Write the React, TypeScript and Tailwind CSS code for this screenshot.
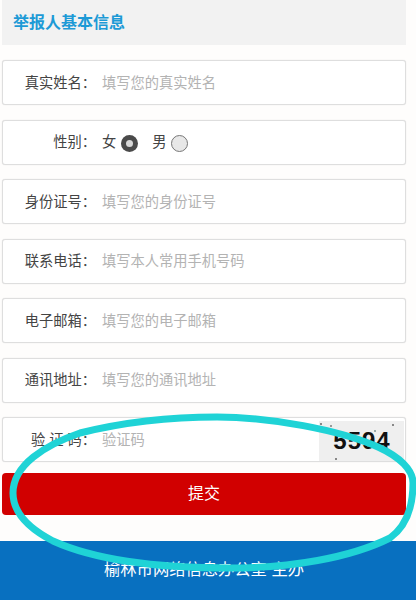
import React from 'react'

const cjk = "font-['Liberation_Sans','Noto_Sans_CJK_SC',sans-serif]"

const fields = [
  { label: '真实姓名：', hint: '填写您的真实姓名' },
  { label: '性别：', radio: true },
  { label: '身份证号：', hint: '填写您的身份证号' },
  { label: '联系电话：', hint: '填写本人常用手机号码' },
  { label: '电子邮箱：', hint: '填写您的电子邮箱' },
  { label: '通讯地址：', hint: '填写您的通讯地址' },
]

const rowClass =
  'flex h-[45px] items-center rounded-[3px] border border-[#dedede] bg-white pt-[2px] text-[14.25px] shadow-[0_0_1px_#d8d8d8]'

const Radio = ({ on }: { on?: boolean }) =>
  on ? (
    <span className="flex h-[17px] w-[17px] shrink-0 items-center justify-center rounded-full bg-[#4a4a4a]">
      <span className="block h-[7px] w-[7px] rounded-full bg-[#d8d8d8]" />
    </span>
  ) : (
    <span className="block h-[17px] w-[17px] shrink-0 rounded-full border border-[#777] bg-[#e8e8e8]" />
  )

const App = () => {
  return (
    <div className={`relative h-[600px] w-[416px] overflow-hidden bg-[#fefdfc] ${cjk}`}>
      <div className="ml-[2px] flex h-[45px] w-[404px] items-center bg-[#f2f2f2] pl-[11px]">
        <span className="text-[16px] font-bold text-[#1d9ad6]">举报人基本信息</span>
      </div>

      <div className="ml-[2px] mt-[15px] flex w-[404px] flex-col gap-[14.5px]">
        {fields.map((f) => (
          <div key={f.label} className={rowClass}>
            <span className="w-[93px] whitespace-pre text-right text-[#444]">{f.label}</span>
            {f.radio ? (
              <div className="ml-[6px] flex items-center text-[#444]">
                <span>女</span>
                <span className="ml-[5px] flex"><Radio on /></span>
                <span className="ml-[14px]">男</span>
                <span className="ml-[4px] flex"><Radio /></span>
              </div>
            ) : (
              <span className="ml-[6px] text-[#b3b3b3]">{f.hint}</span>
            )}
          </div>
        ))}

        <div className={`${rowClass} justify-between pr-[1px]`}>
          <div className="flex items-center">
            <span className="w-[93px] whitespace-pre text-right text-[#444]">验 证 码：</span>
            <span className="ml-[6px] text-[#b3b3b3]">验证码</span>
          </div>
          <div className="relative flex h-[40px] w-[85px] items-center justify-center bg-[#efefef]">
            <span className="pl-[1px] text-[24px] font-bold leading-none tracking-[1px] text-[#111]">5594</span>
            <span className="absolute left-[1px] top-[2px] h-[2px] w-[2px] bg-[#888]" />
            <span className="absolute left-[11px] top-[4px] h-[2px] w-[2px] bg-[#999]" />
            <span className="absolute right-[10px] top-[3px] h-[2px] w-[2px] bg-[#888]" />
            <span className="absolute right-[28px] top-[9px] h-[2px] w-[2px] bg-[#9aa]" />
            <span className="absolute left-[16px] bottom-[1px] h-[2px] w-[2px] bg-[#888]" />
          </div>
        </div>
      </div>

      <div className="ml-[2px] mt-[11px] flex h-[42px] w-[404px] items-center justify-center rounded-[4px] bg-[#d10000] text-[16px] text-white">
        提交
      </div>

      <div className="mt-[26px] flex h-[59px] items-center justify-center bg-[#0870c0] pb-[3px] pr-[8px] text-[16.3px] text-white">
        榆林市网络信息办公室 主办
      </div>

      {/* hand drawn ring over the form */}
      <svg className="absolute left-0 top-0" width="416" height="600" viewBox="0 0 416 600" fill="none">
        <path
          d="M217 417 C270 417 340 430 378 447 C400 457 413 470 413 483 C413 505 408 525 390 538 C350 558 290 568 230 568 C160 568 95 560 53 541 C28 528 13 512 13 493 C13 465 45 445 80 433 C120 423 170 417 217 417 Z"
          stroke="#1fd3d6"
          strokeWidth="7"
        />
      </svg>
    </div>
  )
}

export default App
